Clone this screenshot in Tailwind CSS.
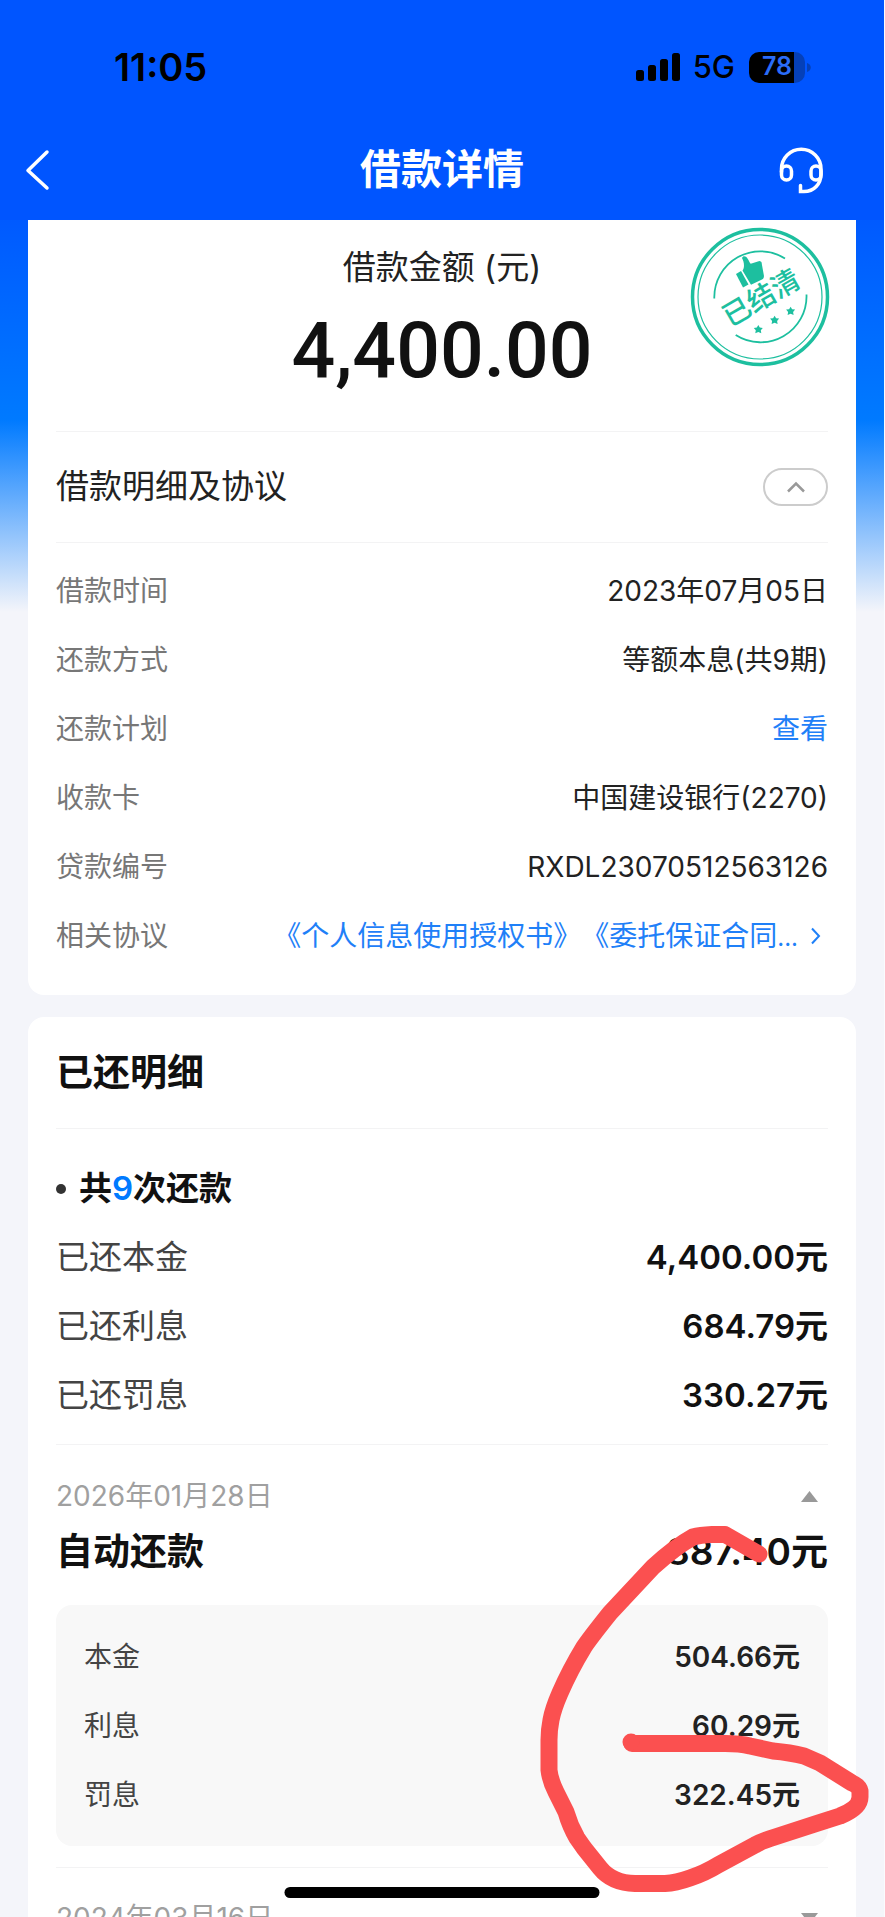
<!DOCTYPE html>
<html lang="zh-CN">
<head>
<meta charset="utf-8">
<meta name="viewport" content="width=device-width, initial-scale=1">
<title>借款详情</title>
<script src="https://cdn.jsdelivr.net/npm/@tailwindcss/browser@4"></script>
</head>
<body class="bg-white">
<div class="relative flex h-screen flex-col overflow-hidden border-r border-white/60 bg-[#f4f5fa] font-['Inter','Noto_Sans_CJK_SC',sans-serif] text-[28px] text-[#222]">

  <header class="shrink-0 bg-[#0055ff]">
    <!-- status bar -->
    <div class="flex h-[120px] items-center justify-between pt-[14px] pr-[73px] pl-[114px] text-black">
      <span class="text-[38px] font-semibold">11:05</span>
      <div class="flex items-center">
        <svg class="h-[28px] w-[46px]" viewBox="0 0 46 28" aria-hidden="true">
          <rect x="1" y="17" width="8" height="11" rx="2.5"/><rect x="13" y="12" width="8" height="16" rx="2.5"/><rect x="25" y="6" width="8" height="22" rx="2.5"/><rect x="37" y="0" width="8" height="28" rx="2.5"/>
        </svg>
        <span class="ml-3 text-[31px] font-medium">5G</span>
        <div class="relative ml-[14px]">
          <svg class="h-[31px] w-[62px]" viewBox="0 0 62 31" aria-hidden="true">
            <path d="M10 0h35v31H10A10 10 0 0 1 0 21V10A10 10 0 0 1 10 0z"/>
            <path d="M45 0h1a10 10 0 0 1 10 10v11a10 10 0 0 1-10 10h-1z" fill="#0540b8"/>
            <path d="M58 11c5 1 5 8 0 9z" fill="#0540b8"/>
          </svg>
          <span class="absolute inset-0 flex items-center justify-center pr-[6px] text-[25px] font-semibold text-[#2a6cf8]">78</span>
        </div>
      </div>
    </div>
    <!-- navigation -->
    <div class="flex h-[100px] items-center justify-between pr-[60px] pl-[24px] text-white">
      <button type="button" aria-label="返回" class="w-[84px]">
        <svg class="h-[42px] w-[26px]" viewBox="0 0 26 42" fill="none" stroke="currentColor" stroke-width="3.500" stroke-linecap="round" stroke-linejoin="round"><path d="M23 3L4 21.500L23 39"/></svg>
      </button>
      <h1 class="text-[41px] font-semibold">借款详情</h1>
      <button type="button" aria-label="客服" class="flex w-[48px] justify-end">
        <svg class="h-[48px] w-[46px]" viewBox="0 0 46 48" fill="none" stroke="currentColor" stroke-width="3.500" stroke-linecap="round">
          <path d="M3.500 26V23a19.700 19.700 0 0 1 39.500 0V28c0 10-7 17.500-17 17.500h-3.500v-6"/>
          <rect x="3.500" y="20" width="10" height="14" rx="5"/>
          <rect x="33" y="20" width="10" height="14" rx="5"/>
        </svg>
      </button>
    </div>
  </header>

  <main class="flex-1 bg-[linear-gradient(to_bottom,#005aff_0px,#007aff_200px,#f4f5fa_392px)] pr-[28px] pl-[28px]">
    <section class="relative rounded-b-[16px] bg-white px-[28px] pb-[25px]">
      <div class="flex h-[212px] flex-col items-center border-b border-[#f3f3f4] pt-[23px]">
        <h2 class="text-[33px] leading-[48px]">借款金额 (元)</h2>
        <p class="font-['Roboto'] text-[77px] leading-[120px] font-medium text-[#111]">4,400.00</p>
      </div>
      <!-- "settled" stamp -->
      <svg class="absolute top-[7px] right-[26px] h-[140px] w-[140px]" viewBox="0 0 140 140" fill="none" stroke="#1dbf9f" role="img" aria-label="已结清">
        <circle cx="70" cy="70" r="67.500" stroke-width="3.500"/>
        <circle cx="70" cy="70" r="62" stroke-width="1.200"/>
        <path d="M24.300 71.500A46 46 0 0 1 95 31.500M116.500 67.500A46 46 0 0 1 45.700 108" stroke-width="1.800"/>
        <g fill="#1dbf9f" stroke="none">
          <path d="M46 47l5-3 7.500 13.500-5.500 3z"/>
          <path d="M52.500 43.500c2.500-3 1.500-9-.5-12.500 1-2.500 4-2 5.500.5 1.500 2 2 4 3.200 5.200l8.800-2.700c2 .3 2.300 1.500 2.400 3.500l2 11c.2 2-.4 3-1.900 4L61 57.800z"/>
          <path id="star" d="M68.300 98l1.500 2.600 3 .3-2 2.300.5 3-3-1.200-3 1.200.5-3-2-2.300 3-.3z"/>
          <use href="#star" x="16.300" y="-9.300"/>
          <use href="#star" x="32.300" y="-18.300"/>
          <text x="71" y="80" transform="rotate(-30 72 70)" text-anchor="middle" font-size="28" font-weight="500">已结清</text>
        </g>
      </svg>

      <div class="flex h-[111px] items-center justify-between border-b border-[#f3f3f4]">
        <h2 class="text-[33px]">借款明细及协议</h2>
        <button type="button" aria-label="收起" class="flex h-[38px] w-[65px] items-center justify-center rounded-full border-2 border-[#ccc]">
          <svg class="h-[12px] w-[18px]" viewBox="0 0 18 12" fill="none" stroke="#999" stroke-width="2.500"><path d="M1 10.500L9 2.500L17 10.500"/></svg>
        </button>
      </div>

      <dl class="pt-[13px]">
        <div class="flex h-[69px] items-center justify-between"><dt class="text-[#777]">借款时间</dt><dd>2023年07月05日</dd></div>
        <div class="flex h-[69px] items-center justify-between"><dt class="text-[#777]">还款方式</dt><dd>等额本息(共9期)</dd></div>
        <div class="flex h-[69px] items-center justify-between"><dt class="text-[#777]">还款计划</dt><dd><a href="#plan" class="text-[#1f80f8]">查看</a></dd></div>
        <div class="flex h-[69px] items-center justify-between"><dt class="text-[#777]">收款卡</dt><dd>中国建设银行(2270)</dd></div>
        <div class="flex h-[69px] items-center justify-between"><dt class="text-[#777]">贷款编号</dt><dd>RXDL23070512563126</dd></div>
        <div class="flex h-[69px] items-center justify-between"><dt class="text-[#777]">相关协议</dt>
          <dd><a href="#agreements" class="flex items-center text-[#1f80f8]">《个人信息使用授权书》<span>《委托保证合同<span class="text-[24px]">...</span></span>
            <svg class="mr-[7px] ml-[12px] h-[18px] w-[11px]" viewBox="0 0 11 18" fill="none" stroke="currentColor" stroke-width="2"><path d="M2 1.500L9 9L2 16.500"/></svg></a></dd>
        </div>
      </dl>
    </section>

    <section class="mt-[22px] rounded-t-[16px] bg-white px-[28px]">
      <h2 class="flex h-[112px] items-center border-b border-[#f3f3f4] text-[37px] font-semibold text-[#111]">已还明细</h2>
      <div class="border-b border-[#f3f3f4] pt-[25px] pb-[14px]">
        <h3 class="flex h-[69px] items-center text-[33px] font-semibold text-[#111]"><span class="mr-[13px] size-[10px] rounded-full bg-[#333]"></span>共<span class="text-[#007aff]">9</span>次还款</h3>
        <dl class="text-[33px]">
          <div class="flex h-[69px] items-center justify-between"><dt class="text-[#444]">已还本金</dt><dd class="font-semibold text-[#111]">4,400.00元</dd></div>
          <div class="flex h-[69px] items-center justify-between"><dt class="text-[#444]">已还利息</dt><dd class="font-semibold text-[#111]">684.79元</dd></div>
          <div class="flex h-[69px] items-center justify-between"><dt class="text-[#444]">已还罚息</dt><dd class="font-semibold text-[#111]">330.27元</dd></div>
        </dl>
      </div>

      <article class="relative border-b border-[#f3f3f4] pt-[27px] pb-[21px]">
        <div class="flex h-[48px] items-center justify-between text-[#a0a0a0]">
          <time datetime="2026-01-28">2026年01月28日</time>
          <button type="button" aria-label="收起" class="mr-[10px]"><svg class="h-[11px] w-[17px]" viewBox="0 0 17 11" fill="#999"><path d="M8.500 0L17 11H0z"/></svg></button>
        </div>
        <h3 class="flex h-[64px] items-center justify-between text-[37px] font-semibold text-[#111]"><span>自动还款</span><span>887.40元</span></h3>
        <dl class="mt-[21px] rounded-[16px] bg-[#f8f8f8] px-[28px] py-[17px]">
          <div class="flex h-[69px] items-center justify-between"><dt class="text-[#444]">本金</dt><dd class="font-semibold">504.66元</dd></div>
          <div class="flex h-[69px] items-center justify-between"><dt class="text-[#444]">利息</dt><dd class="font-semibold">60.29元</dd></div>
          <div class="flex h-[69px] items-center justify-between"><dt class="text-[#444]">罚息</dt><dd class="font-semibold">322.45元</dd></div>
        </dl>
        <!-- hand-drawn marker stroke -->
        <svg class="pointer-events-none absolute top-[75px] -right-[43px] z-10 h-[380px] w-[345px]" viewBox="526 1520 345 380" fill="none" stroke="#fb5050" stroke-width="17" stroke-linecap="round" stroke-linejoin="round" aria-hidden="true">
          <path d="M759 1554L725 1534.500H712Q700 1535 693 1537Q675 1547 653 1567L610 1613Q590 1638 584 1647Q570 1670 560 1693Q553 1709 551 1720Q549 1730 549 1740V1770Q550 1780 556 1792L566 1812Q570 1826 577 1838L584 1848L600 1868Q612 1883 635 1883.500H665Q676 1883 690 1878Q705 1873 718 1865L755 1845Q762 1841 775 1837L815 1824L840 1816Q860 1808 860 1797V1791Q859 1786 852 1783L820 1763L804 1756Q790 1752.500 773 1751L750 1746Q740 1743.500 725 1743.500H632"/>
          <path d="M631 1742V1742"/>
        </svg>
      </article>

      <article class="pt-[26px]">
        <div class="flex h-[48px] items-center justify-between text-[#a0a0a0]">
          <time datetime="2024-03-16">2024年03月16日</time>
          <button type="button" aria-label="展开" class="mr-[10px]"><svg class="h-[11px] w-[17px]" viewBox="0 0 17 11" fill="#999"><path d="M8.500 11L17 0H0z"/></svg></button>
        </div>
      </article>
    </section>
  </main>

  <div class="absolute bottom-[19px] left-1/2 h-[11px] w-[315px] -translate-x-1/2 rounded-full bg-black"></div>
</div>
</body>
</html>
